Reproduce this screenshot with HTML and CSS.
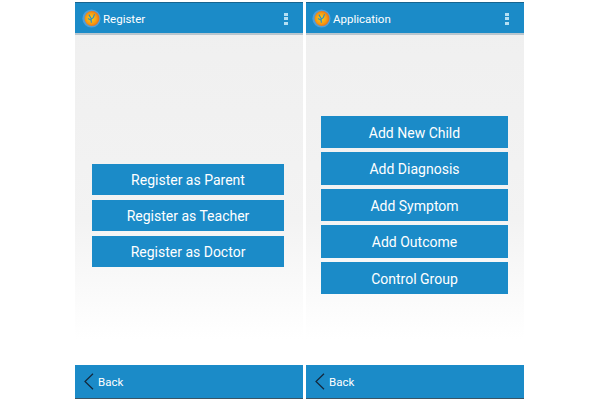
FILE: index.html
```html
<!DOCTYPE html>
<html lang="en">
<head>
<meta charset="utf-8">
<title>Register and Application</title>
<link rel="stylesheet" href="styles.css">
</head>
<body>
<main class="stage">
  <section class="phone phone-register">
    <header class="topbar">
      <svg class="logo" viewBox="0 0 22 22" aria-hidden="true"><use href="#logo-mark"/></svg>
      <span class="title">Register</span>
      <span class="menu" aria-hidden="true"><i></i><i></i><i></i></span>
    </header>
    <div class="content">
      <a class="btn">Register as Parent</a>
      <a class="btn">Register as Teacher</a>
      <a class="btn">Register as Doctor</a>
    </div>
    <footer class="bottombar">
      <svg class="chev" viewBox="0 0 10 17" aria-hidden="true"><path d="M9 .7 1 8.5l8 7.8"/></svg>
      <span class="back">Back</span>
    </footer>
  </section>
  <section class="phone phone-app">
    <header class="topbar">
      <svg class="logo" viewBox="0 0 22 22" aria-hidden="true">
        <defs>
          <radialGradient id="orb" cx="45%" cy="50%" r="55%">
            <stop offset="0" stop-color="#fbd41c"/>
            <stop offset=".65" stop-color="#f79c10"/>
            <stop offset="1" stop-color="#e8701a"/>
          </radialGradient>
          <g id="logo-mark">
            <circle cx="11" cy="11" r="10.5" fill="#4f9fd8"/>
            <circle cx="11.5" cy="11" r="8.6" fill="url(#orb)"/>
            <path d="M8 6.5 10.5 11l.3 5M14.5 6l-1.5 4-2.2 1.5M7 11l3.5 2" fill="none" stroke="#2f8fc0" stroke-width="1.3"/>
          </g>
        </defs>
        <use href="#logo-mark"/>
      </svg>
      <span class="title">Application</span>
      <span class="menu" aria-hidden="true"><i></i><i></i><i></i></span>
    </header>
    <div class="content">
      <a class="btn">Add New Child</a>
      <a class="btn">Add Diagnosis</a>
      <a class="btn">Add Symptom</a>
      <a class="btn">Add Outcome</a>
      <a class="btn">Control Group</a>
    </div>
    <footer class="bottombar">
      <svg class="chev" viewBox="0 0 10 17" aria-hidden="true"><path d="M9 .7 1 8.5l8 7.8"/></svg>
      <span class="back">Back</span>
    </footer>
  </section>
</main>
</body>
</html>
```
FILE: styles.css
```css
* { box-sizing: border-box; }
html, body { margin: 0; height: 100%; background: #fff; }
body { font-family: Roboto, "Liberation Sans", sans-serif; overflow: hidden; }
.stage {
  width: 600px;
  height: 400px;
  display: flex;
  gap: 3px;
  padding: 2px 0 1px 75px;
}
.phone {
  display: flex;
  flex-direction: column;
  background: linear-gradient(#efefef 0%, #f3f3f3 55%, #ffffff 85%, #ffffff 100%);
}
.phone-register { width: 228px; }
.phone-app { width: 218px; }
.topbar {
  height: 33px;
  display: flex;
  align-items: center;
  padding: 1px 6px 0 7px;
  background: #1b8bc8;
  border-top: 1px solid #17648f;
  border-bottom: 2px solid #b9c6ce;
  color: #fff;
}
.phone-app .topbar { padding-left: 6px; }
.logo { width: 19px; height: 19px; flex: none; }
.title { margin-left: 2px; font-size: 11.5px; flex: 1; }
.menu {
  display: flex;
  flex-direction: column;
  gap: 1.5px;
  margin-right: 9px;
}
.menu i { width: 4px; height: 3px; background: #b5dff3; }
.content {
  flex: 1;
  display: flex;
  flex-direction: column;
  justify-content: center;
}
.btn {
  display: flex;
  align-items: center;
  justify-content: center;
  background: #1b8bc8;
  color: #fff;
  font-size: 14px;
}
.phone-register .content { padding: 31px 19px 0 17px; gap: 5px; }
.phone-register .btn { height: 31px; }
.phone-app .content { padding: 10px 16px 0 15px; gap: 4px; }
.phone-app .btn { height: 32.5px; padding-top: 1px; }
.bottombar {
  height: 34px;
  display: flex;
  align-items: center;
  padding: 0 0 0 9px;
  background: #1b8bc8;
  border-bottom: 1px solid #3a5565;
  color: #fff;
}
.chev { width: 10px; height: 17px; flex: none; }
.chev path { fill: none; stroke: #14263a; stroke-width: 1.2; }
.back { margin-left: 4px; font-size: 11.5px; }
```
